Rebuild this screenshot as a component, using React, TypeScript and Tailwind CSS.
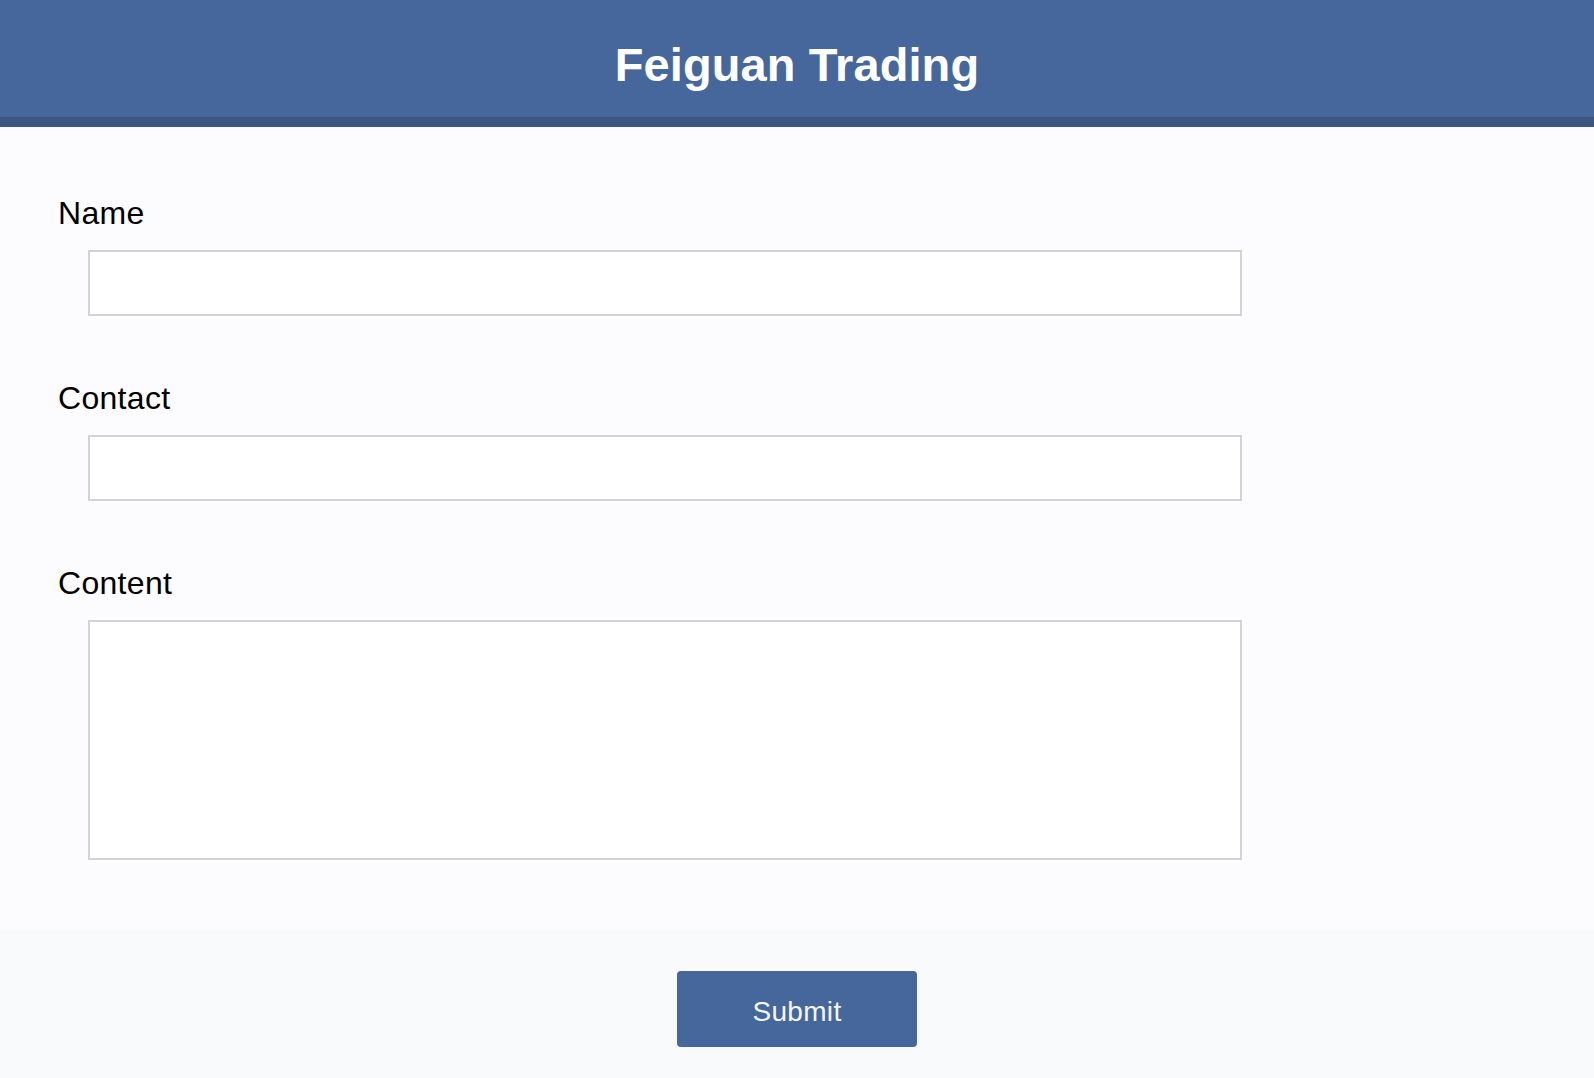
import React from "react";

export default function App() {
  const font = { fontFamily: '"Liberation Sans", Arial, Helvetica, sans-serif' };
  return (
    <div className="min-h-[1078px] w-full flex flex-col bg-[#fcfcfe]" style={font}>
      <header className="h-[117px] bg-[#46679c] pt-[39px]">
        <h1 className="text-center text-[47px] leading-[52px] font-bold text-white tracking-[0.1px]">Feiguan Trading</h1>
      </header>
      <div className="h-[10px] bg-[#3b5480]" />
      <main className="flex flex-col pl-[58px] pt-[68px] pb-[69px] bg-[#fcfcfe]">
        <label className="text-[32px] leading-[36px] tracking-[0.3px] text-black">Name</label>
        <input className="ml-[30px] mt-[19px] w-[1154px] h-[66px] border-2 border-[#d3d3d3] bg-white outline-none" />
        <label className="mt-[64px] text-[32px] leading-[36px] tracking-[0.3px] text-black">Contact</label>
        <input className="ml-[30px] mt-[19px] w-[1154px] h-[66px] border-2 border-[#d3d3d3] bg-white outline-none" />
        <label className="mt-[64px] text-[32px] leading-[36px] tracking-[0.3px] text-black">Content</label>
        <textarea className="ml-[30px] mt-[19px] w-[1154px] h-[240px] border-2 border-[#d3d3d3] bg-white outline-none resize-none" />
      </main>
      <footer className="flex-1 flex justify-center pt-[42px] pb-[31px] bg-[#f9fafc]">
        <button className="w-[240px] h-[76px] rounded-[4px] bg-[#46679c] pt-[5px] text-[28px] tracking-[0.3px] text-[#f4f6fa]">Submit</button>
      </footer>
    </div>
  );
}
